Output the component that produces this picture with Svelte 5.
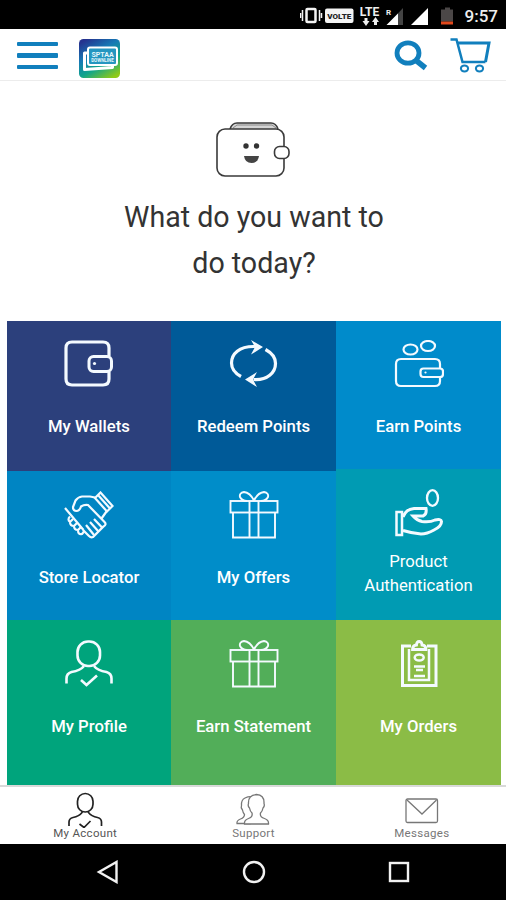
<script lang="ts">
type Tile = {
    label: string;
    icon: string;
    tone: string;
};
const tiles: Tile[] = [
    { label: 'My Wallets', icon: 'wallet', tone: 'indigo' },
    { label: 'Redeem Points', icon: 'redeem', tone: 'navy' },
    { label: 'Earn Points', icon: 'earn', tone: 'sky' },
    { label: 'Store Locator', icon: 'handshake', tone: 'blue' },
    { label: 'My Offers', icon: 'gift', tone: 'azure' },
    { label: 'Product Authentication', icon: 'hand', tone: 'teal' },
    { label: 'My Profile', icon: 'profile', tone: 'emerald' },
    { label: 'Earn Statement', icon: 'gift', tone: 'green' },
    { label: 'My Orders', icon: 'orders', tone: 'lime' },
];
const tabs = [
    { label: 'My Account', icon: 'account' },
    { label: 'Support', icon: 'support' },
    { label: 'Messages', icon: 'messages' },
];
let activeTab = $state('account');
</script>

<div class="screen">
  <div class="status-bar">
    <svg class="signals" width="166" height="28" viewBox="0 0 166 28">
      <g fill="none" stroke="#f4f4f4">
        <rect x="6.500" y="8" width="9" height="13" rx="1" stroke-width="2.500" />
        <path d="M2.500 9v11M0.500 12v5M19.500 9v11M21.500 12v5" stroke-width="1.500" />
      </g>
      <rect x="25" y="7.500" width="28.500" height="14.500" rx="2" fill="#f4f4f4" />
      <text x="39.250" y="17.800" class="volte">VOLTE</text>
      <text x="69.500" y="15" class="lte">LTE</text>
      <path d="M66 17v4M75.500 24v-4" stroke="#eee" stroke-width="3" />
      <path d="M62.500 20h7L66 25zM72 21h7L75.500 16z" fill="#eee" />
      <text x="88.500" y="14" class="roaming">R</text>
      <path d="M103 7v17H87z" fill="#444" />
      <path d="M98 12.500V24H86.500z" fill="#fff" />
      <path d="M128 7v17h-17z" fill="#fff" />
      <path d="M145 6.500h5v2h3v12h-12v-12h4z" fill="#4b4747" />
      <path d="M141 20.500h12v3h-12z" fill="#e0481c" />
    </svg>
    <span class="time">9:57</span>
  </div>

  <header>
    <button class="menu" aria-label="Menu">
      <span></span>
      <span></span>
      <span></span>
    </button>
    <svg class="logo" width="41" height="39" viewBox="0 0 41 39">
      <defs>
        <linearGradient id="logo-bg" x1="0.200" y1="0" x2="0.800" y2="1">
          <stop offset="0" stop-color="#25338f" />
          <stop offset="0.350" stop-color="#1679b5" />
          <stop offset="0.650" stop-color="#10a58b" />
          <stop offset="1" stop-color="#8fca18" />
        </linearGradient>
      </defs>
      <rect width="41" height="39" rx="4.500" fill="url(#logo-bg)" />
      <path d="M8 14H5.500v16.500l28-2v-2" fill="none" stroke="#fff" stroke-width="3" stroke-linejoin="round" />
      <rect x="9" y="8.500" width="29" height="17.500" rx="2" fill="#2596c0" stroke="#fff" stroke-width="2" />
      <text x="23.500" y="17.500" class="logo-top">SPTAA</text>
      <text x="23.500" y="22.500" class="logo-sub">DOWNLINE</text>
    </svg>
    <div class="spacer"></div>
    <svg class="search" width="34" height="31" viewBox="0 0 34 31">
      <ellipse cx="14" cy="13" rx="11" ry="10.200" fill="none" stroke="#117fbd" stroke-width="4.800" />
      <path d="M21.500 20l10 8" stroke="#117fbd" stroke-width="5.500" />
    </svg>
    <svg class="cart" width="41" height="36" viewBox="0 0 41 36" fill="none" stroke="#117fbd">
      <path d="M0.500 2.500h6l6 22.500h23" stroke-width="2.500" />
      <path d="M7.500 6h31.500l-3.500 19" stroke-width="3" />
      <ellipse cx="14.500" cy="31.500" rx="3.600" ry="3" stroke-width="2" />
      <ellipse cx="29.500" cy="31.500" rx="3.600" ry="3" stroke-width="2" />
    </svg>
  </header>

  <section class="hero">
    <svg width="74" height="56" viewBox="0 0 74 56" fill="none" stroke="#3a3a3a" stroke-width="1.600">
      <path d="M14 7q2-6 7-6h34q5 0 7 6" fill="#d5d5d5" />
      <path d="M17 6l4-3h35l4 3" stroke="#8a8a8a" stroke-width="1" />
      <rect x="1" y="7" width="67" height="47" rx="8" fill="#fff" />
      <rect x="58.500" y="24.500" width="14.500" height="12" rx="5" fill="#fff" />
      <circle cx="30" cy="24" r="2.700" fill="#333" stroke="none" />
      <circle cx="40.500" cy="24" r="2.700" fill="#333" stroke="none" />
      <path d="M28 34h15q-1 7-7.500 7t-7.500-7z" fill="#444" stroke="none" />
    </svg>
    <h1>What do you want to<br />do today?</h1>
  </section>

  <main class="tiles">
    {#each tiles as tile}
      <button class="tile {tile.tone}">
        <svg class="tile-icon" width="50" height="48" viewBox="0 0 50 48">
          {#if tile.icon === 'wallet'}
            <path d="M45 16V8q0-6-6-6H8Q2 2 2 8v31q0 6 6 6h31q6 0 6-6v-7" stroke-width="3.200" />
            <rect x="25" y="16.500" width="22.500" height="15" rx="4.500" stroke-width="3" />
            <circle cx="30.500" cy="23.500" r="1.600" class="solid" />
          {:else if tile.icon === 'redeem'}
            <path d="M26 6.500C10 6 2.500 14 2.500 23c0 6 4 10.500 9.500 13.500" stroke-width="3.200" />
            <path d="M36.500 9.500C43 13 46.500 18 46.500 23.500c0 9-8 17-22 16" stroke-width="3.200" />
            <path d="M22 0l12 7-12 7.500 4-7.500z" class="solid" />
            <path d="M28 32l-12 7.500 12 7.500-4-7.500z" class="solid" />
          {:else if tile.icon === 'earn'}
            <ellipse cx="16.500" cy="9.500" rx="7" ry="5" stroke-width="2.200" />
            <ellipse cx="34" cy="6" rx="7" ry="5" stroke-width="2.200" />
            <path d="M46 28v-4q0-5-5-5H7q-5 0-5 5v17q0 5 5 5h34q5 0 5-5v-4" stroke-width="2.200" />
            <rect x="26.500" y="28.500" width="22.500" height="8.500" rx="3" stroke-width="2.200" />
            <circle cx="31.500" cy="32.500" r="1.100" class="solid" />
          {:else if tile.icon === 'handshake'}
            <g stroke-width="2.200">
              <path d="M31 7l5.500-5.500L48.500 15 43 20.500zM34 4l12 13.500" />
              <path d="M31 6.500L26 5.500h-8q-4 .5-6.500 4L9 16q0 4 3.500 4 3 0 4.500-4.500 3-2 7-1.500l16.500 17q2.500 2.500-1 4.500L29 46q-2 1-4-1l-6-6" />
              <path d="M42.500 20.500l-5 7M1 17l18.500 22" />
              <path d="M6 25.500q-3 3 0 5.500 0 4 4 4 0 4 4 4 0 5 4 4l2.500-3M6 31l3-3M10 35l3-3M14 39l3-3" />
              <path d="M22 34l8 10M26 31l8.500 9.500M30 28l8.500 9" />
            </g>
          {:else if tile.icon === 'gift'}
            <g stroke-width="1.900">
              <rect x="1.500" y="10" width="47" height="11.500" />
              <path d="M4 21.500V46.500h42V21.500M20.500 10v36.500M29.500 10v36.500" />
              <path d="M25 9.500Q21 1.500 15 1q-5 1-4 5 2 4 7 4M25 9.500Q29 1.500 35 1q5 1 4 5-2 4-7 4" />
            </g>
          {:else if tile.icon === 'hand'}
            <ellipse cx="38.500" cy="9" rx="5.500" ry="7.800" stroke-width="2.300" />
            <path d="M2.500 23h5.500v23H2.500z" stroke-width="2.500" />
            <path d="M9 28q3-8 11-8.500h12q1 6-3 7.500h-10q4 4.500 9 5.500 8 1 13-1.500 6-1.500 6.500 1.500 0 5-7.500 8.500-7 4-13 4-8-.5-18-3.500" stroke-width="3" />
          {:else if tile.icon === 'profile'}
            <rect x="13.500" y="1.500" width="22.500" height="24.500" rx="10.500" stroke-width="2.600" />
            <path d="M2.500 43.500v-5q0-5 5-6.500 9-1.500 12.500-6M47.500 43.500v-5q0-5-5-6.500-9-1.500-12.500-6" stroke-width="2.600" />
            <path d="M17 40l5.500 5L33 35.500" stroke-width="2.600" />
          {:else}
            <path d="M17 6H8.500v39.500h33.500V6H33" stroke-width="3" />
            <path d="M15 9v31h20V9" stroke-width="2.500" />
            <path d="M18.500 9.500q0-4 4-4.500 0-3.500 2.700-3.500T28 5q4 .5 4 4.500z" stroke-width="2.800" />
            <ellipse cx="25.200" cy="17.500" rx="4.500" ry="3" stroke-width="2.500" />
            <path d="M20 26.500h11M22 30h7M20 36h11" stroke-width="2.300" />
          {/if}
        </svg>
        <span class="tile-label">{tile.label}</span>
      </button>
    {/each}
  </main>

  <nav class="tabs">
    {#each tabs as tab}
      <button class="tab" class:active={activeTab === tab.icon} onclick={() => (activeTab = tab.icon)}>
        <svg width="36" height="36" viewBox="0 0 36 36">
          {#if tab.icon === 'account'}
            <rect x="10.500" y="1.500" width="15.500" height="18.500" rx="7.700" />
            <path d="M2 34v-4q0-3.500 4-4.500 6-1 9.500-5.500M34.500 34v-4q0-3.500-4-4.500-6-1-9.500-5.500M12.500 32l4.500 3.500 6.500-6.500" />
          {:else if tab.icon === 'support'}
            <path d="M20 5.500q-5-2-10 .5-4 2-3.500 7.500-1 2 1 4.500.5 3 2 4.500 0 3-4 4.500-4 1.500-3.500 4.500h14" />
            <path class="front" d="M17 21q-2-2-2.500-5-2-2-1-4.500-.5-8.500 8-9 8 .5 7.500 9 1 2.500-1 4.500-.5 3-2.500 5-1 4 4 5.500 4.500 1.500 4 5.500H9.500q-.5-4 4-5.500 4.500-1.500 3.500-5.500z" />
          {:else}
            <rect x="2" y="7" width="31.500" height="23.500" rx="1.500" />
            <path d="M3 8l15 14L32.500 8" />
          {/if}
        </svg>
        <span>{tab.label}</span>
      </button>
    {/each}
  </nav>

  <div class="system-bar">
    <svg width="24" height="24" viewBox="0 0 24 24"><path d="M20.500 2v20L3 12z" /></svg>
    <svg width="24" height="24" viewBox="0 0 24 24"><circle cx="12" cy="12" r="10" /></svg>
    <svg width="24" height="24" viewBox="0 0 24 24"><rect x="3" y="3" width="18" height="18" /></svg>
  </div>
</div>

<style>
  :global(body) {
    margin: 0;
    background: #fff;
  }

  .screen {
    display: flex;
    flex-direction: column;
    width: 506px;
    height: 900px;
    overflow: hidden;
    background: #fff;
    font-family: Roboto, 'Liberation Sans', sans-serif;
  }

  button {
    padding: 0;
    border: none;
    background: none;
    font-family: inherit;
    cursor: pointer;
  }

  svg {
    display: block;
    flex: none;
  }

  .status-bar {
    display: flex;
    align-items: center;
    justify-content: flex-end;
    height: 29px;
    box-sizing: border-box;
    padding-right: 8px;
    background: #000;
    color: #eee;
  }

  .signals {
    margin-right: -1px;
  }

  .volte {
    font-size: 8px;
    font-weight: 900;
    text-anchor: middle;
    fill: #222;
  }

  .lte {
    font-size: 12px;
    font-weight: 700;
    text-anchor: middle;
    fill: #eee;
  }

  .roaming {
    font-size: 8px;
    font-weight: 700;
    text-anchor: middle;
    fill: #eee;
  }

  .time {
    font-size: 17px;
    font-weight: 500;
    line-height: 28px;
    padding-top: 2px;
  }

  header {
    display: flex;
    align-items: center;
    height: 52px;
    box-sizing: border-box;
    padding: 0 15px 0 17px;
    border-bottom: 1px solid #ececec;
  }

  .menu {
    display: flex;
    flex-direction: column;
    gap: 7px;
    width: 41px;
    margin-right: 21px;
    padding-top: 2px;
  }

  .menu span {
    height: 4.500px;
    border-radius: 1px;
    background: #117fbd;
  }

  .logo {
    margin-top: 7px;
  }

  .logo-top {
    font-size: 7px;
    font-weight: 700;
    text-anchor: middle;
    fill: #e6f6fb;
  }

  .logo-sub {
    font-size: 4.500px;
    font-weight: 700;
    text-anchor: middle;
    fill: #e6f6fb;
  }

  .spacer {
    flex: 1;
  }

  .search {
    margin-top: 1px;
    margin-right: 22px;
  }

  .cart {
    margin-top: 1px;
  }

  .hero {
    display: flex;
    flex-direction: column;
    align-items: center;
    height: 240px;
    box-sizing: border-box;
    padding-top: 41px;
  }

  h1 {
    margin: 17px 0 0;
    padding-left: 2px;
    font-size: 28.600px;
    font-weight: 400;
    line-height: 45.500px;
    text-align: center;
    color: #333;
  }

  .tiles {
    display: grid;
    grid-template-columns: 164px 165px 165px;
    grid-template-rows: 150px 149px 165px;
    padding-left: 7px;
  }

  .tile {
    display: flex;
    flex-direction: column;
    align-items: center;
    padding-top: 20px;
    color: #fff;
  }

  .tile-icon {
    fill: none;
    stroke: #f4faff;
  }

  .solid {
    fill: #f4faff;
    stroke: none;
  }

  .tile-label {
    margin-top: 27px;
    font-size: 16.700px;
    font-weight: 500;
    line-height: 24px;
  }

  .indigo,
  .navy,
  .sky {
    padding-top: 19px;
  }

  .indigo {
    background: #2c407c;
  }

  .navy {
    background: #005a98;
  }

  .sky {
    background: #008bcb;
  }

  .blue {
    background: #0085c3;
  }

  .azure {
    background: #008dc9;
  }

  .teal {
    margin-top: -2px;
    background: #009bb3;
  }

  .teal .tile-label {
    width: 120px;
    margin-top: 13px;
    font-weight: 400;
  }

  .emerald {
    background: #00a47c;
  }

  .green {
    background: #52ae59;
  }

  .lime {
    background: #8bbc46;
  }

  .tabs {
    display: grid;
    grid-template-columns: repeat(3, 1fr);
    height: 59px;
    box-sizing: border-box;
    padding-left: 1px;
    border-top: 2px solid #d9d9d9;
  }

  .tab {
    display: flex;
    flex-direction: column;
    align-items: center;
    padding-top: 5px;
    color: #777;
  }

  .tab svg {
    fill: none;
    stroke: #777;
    stroke-width: 1.300;
  }

  .tab .front {
    fill: #fff;
  }

  .tab.active {
    color: #555;
  }

  .tab.active svg {
    stroke: #222;
    stroke-width: 1.700;
  }

  .tab span {
    margin-top: -2px;
    font-size: 11.500px;
    line-height: 14px;
    letter-spacing: 0.300px;
  }

  .system-bar {
    display: flex;
    align-items: center;
    justify-content: center;
    gap: 121.500px;
    height: 56px;
    padding-left: 1px;
    background: #000;
  }

  .system-bar svg {
    fill: none;
    stroke: #f2f2f2;
    stroke-width: 2.400;
  }
</style>
